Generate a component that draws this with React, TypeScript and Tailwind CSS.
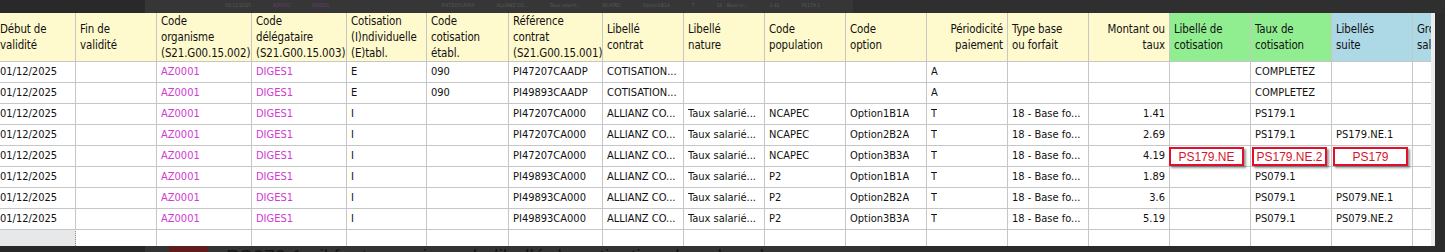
import React from "react";

type Col = { w: string; head: string[]; bg?: string; headRight?: boolean; right?: boolean; pink?: boolean };

const cols: Col[] = [
  { w: "w-[80px]", head: ["Début de", "validité"] },
  { w: "w-[81px]", head: ["Fin de", "validité"] },
  { w: "w-[95px]", head: ["Code", "organisme", "(S21.G00.15.002)"], pink: true },
  { w: "w-[95px]", head: ["Code", "délégataire", "(S21.G00.15.003)"], pink: true },
  { w: "w-[80px]", head: ["Cotisation", "(I)ndividuelle", "(E)tabl."] },
  { w: "w-[82px]", head: ["Code", "cotisation", "établ."] },
  { w: "w-[94px]", head: ["Référence", "contrat", "(S21.G00.15.001)"] },
  { w: "w-[81px]", head: ["Libellé", "contrat"] },
  { w: "w-[81px]", head: ["Libellé", "nature"] },
  { w: "w-[81px]", head: ["Code", "population"] },
  { w: "w-[81px]", head: ["Code", "option"] },
  { w: "w-[81px]", head: ["Périodicité", "paiement"], headRight: true },
  { w: "w-[81px]", head: ["Type base", "ou forfait"] },
  { w: "w-[81px]", head: ["Montant ou", "taux"], headRight: true, right: true },
  { w: "w-[81px]", head: ["Libellé de", "cotisation"], bg: "bg-[#90ee90]" },
  { w: "w-[81px]", head: ["Taux de", "cotisation"], bg: "bg-[#90ee90]" },
  { w: "w-[81px]", head: ["Libellés", "suite"], bg: "bg-[#add8e6]" },
  { w: "w-[81px]", head: ["Groupe", "salarié"], bg: "bg-[#add8e6]" },
];

const D = "01/12/2025";
const rows: string[][] = [
  [D, "", "AZ0001", "DIGES1", "E", "090", "PI47207CAADP", "COTISATION...", "", "", "", "A", "", "", "", "COMPLETEZ", "", ""],
  [D, "", "AZ0001", "DIGES1", "E", "090", "PI49893CAADP", "COTISATION...", "", "", "", "A", "", "", "", "COMPLETEZ", "", ""],
  [D, "", "AZ0001", "DIGES1", "I", "", "PI47207CA000", "ALLIANZ CO...", "Taux salarié...", "NCAPEC", "Option1B1A", "T", "18 - Base fo...", "1.41", "", "PS179.1", "", ""],
  [D, "", "AZ0001", "DIGES1", "I", "", "PI47207CA000", "ALLIANZ CO...", "Taux salarié...", "NCAPEC", "Option2B2A", "T", "18 - Base fo...", "2.69", "", "PS179.1", "PS179.NE.1", ""],
  [D, "", "AZ0001", "DIGES1", "I", "", "PI47207CA000", "ALLIANZ CO...", "Taux salarié...", "NCAPEC", "Option3B3A", "T", "18 - Base fo...", "4.19", "", "", "", ""],
  [D, "", "AZ0001", "DIGES1", "I", "", "PI49893CA000", "ALLIANZ CO...", "Taux salarié...", "P2", "Option1B1A", "T", "18 - Base fo...", "1.89", "", "PS079.1", "", ""],
  [D, "", "AZ0001", "DIGES1", "I", "", "PI49893CA000", "ALLIANZ CO...", "Taux salarié...", "P2", "Option2B2A", "T", "18 - Base fo...", "3.6", "", "PS079.1", "PS079.NE.1", ""],
  [D, "", "AZ0001", "DIGES1", "I", "", "PI49893CA000", "ALLIANZ CO...", "Taux salarié...", "P2", "Option3B3A", "T", "18 - Base fo...", "5.19", "", "PS079.1", "PS079.NE.2", ""],
];

// red annotation boxes drawn over row 5
const boxes: Record<number, { text: string; left: string }> = {
  14: { text: "PS179.NE", left: "left-[-1px]" },
  15: { text: "PS179.NE.2", left: "left-[1px]" },
  16: { text: "PS179", left: "left-[1px]" },
};

const cellFont = "font-['DejaVu_Sans_Condensed','DejaVu_Sans',sans-serif] [font-stretch:condensed]";

function HeaderRow() {
  return (
    <div className="flex h-[49px]">
      {cols.map((c, i) => (
        <div
          key={i}
          className={`${c.w} shrink-0 h-full flex flex-col justify-center px-[4px] border-r border-b border-[#c6c6c6] overflow-hidden whitespace-nowrap text-[11.4px] tracking-[-0.1px] leading-[16px] text-[#111] ${c.bg ?? "bg-[#fffacd]"} ${c.headRight ? "items-end" : "items-start"}`}
        >
          {c.head.map((l, j) => (
            <span key={j}>{l}</span>
          ))}
        </div>
      ))}
    </div>
  );
}

function DataRow({ cells, idx }: { cells: string[]; idx: number }) {
  return (
    <div className="flex h-[21px]">
      {cols.map((c, i) => {
        const box = idx === 4 ? boxes[i] : undefined;
        return (
          <div
            key={i}
            className={`${c.w} shrink-0 relative h-full flex items-center px-[4px] border-r border-b border-[#c6c6c6] bg-white whitespace-nowrap text-[11px] ${c.right ? "justify-end" : ""} ${c.pink ? "text-[#d23ad2]" : "text-[#111]"}`}
          >
            <span className="overflow-hidden">{cells[i]}</span>
            {box && (
              <div
                className={`absolute ${box.left} top-[1px] w-[75px] h-[19px] border-2 border-[#e0102a] bg-white shadow-[2px_2px_2px_rgba(0,0,0,0.4)] z-10 flex items-center justify-center font-['Liberation_Sans',Arial,sans-serif] [font-stretch:normal] text-[12px] text-[#d8142e]`}
              >
                {box.text}
              </div>
            )}
          </div>
        );
      })}
    </div>
  );
}

function EmptyRow() {
  return (
    <div className="flex h-[17px]">
      {cols.map((c, i) => (
        <div
          key={i}
          className={`${c.w} shrink-0 h-full ${i === 0 ? "bg-[#e6e8ea] border-r border-t border-dotted border-[#8a8a8a] mt-[-1px] h-[18px]" : "bg-white border-r border-[#c6c6c6]"}`}
        />
      ))}
    </div>
  );
}

function TopBar() {
  return (
    <div className="flex h-[13px] bg-[#2c2c2c] overflow-hidden">
      <div className="w-[145px] shrink-0 bg-[#292929]" />
      <div className="w-[708px] shrink-0 bg-[#363636] flex items-start gap-[22px] pl-[80px] pt-[2px] text-[5px] leading-[6px] text-[#595959] font-['DejaVu_Sans',sans-serif]">
        <span>01/12/2025</span>
        <span className="text-[#6a3d7a]">AZ0001</span>
        <span className="text-[#6a3d7a]">DIGES1</span>
        <span className="ml-[90px]">PI47207CA000</span>
        <span>ALLIANZ CO...</span>
        <span>Taux salarié...</span>
        <span>NCAPEC</span>
        <span>Option1B1A</span>
        <span>T</span>
        <span>18 - Base fo...</span>
        <span>1.41</span>
        <span>PS179.1</span>
      </div>
      <div className="flex-1 bg-[#2f2f2f]" />
    </div>
  );
}

function BottomBar() {
  return (
    <div className="flex h-[6px] overflow-hidden bg-[#2b2b2b]">
      <div className="w-[145px] shrink-0 bg-[#272727]" />
      <div className="w-[735px] shrink-0 bg-[#333] flex items-start overflow-hidden">
        <div className="ml-[24px] w-[39px] h-[6px] bg-[#5e1c1c]" />
        <span className="ml-[18px] text-[20px] leading-[22px] text-[#161616] font-['Liberation_Sans',sans-serif] whitespace-nowrap">
          PS079.1 : il faut renseigner le libellé de cotisation dans la colonne
        </span>
      </div>
      <div className="flex-1" />
    </div>
  );
}

export default function App() {
  return (
    <div className={`w-[1445px] h-[252px] overflow-hidden bg-[#2b2b2b] flex flex-col ${cellFont}`}>
      <TopBar />
      <div className="flex h-[233px]">
        <div className="w-[1431px] shrink-0 overflow-hidden bg-white">
          <div className="ml-[-4px] w-max">
            <HeaderRow />
            {rows.map((r, i) => (
              <DataRow key={i} cells={r} idx={i} />
            ))}
            <EmptyRow />
          </div>
        </div>
        <div className="w-[4px] shrink-0 bg-[#ececec]" />
        <div className="flex-1 bg-[#2b2b2b]" />
      </div>
      <BottomBar />
    </div>
  );
}
